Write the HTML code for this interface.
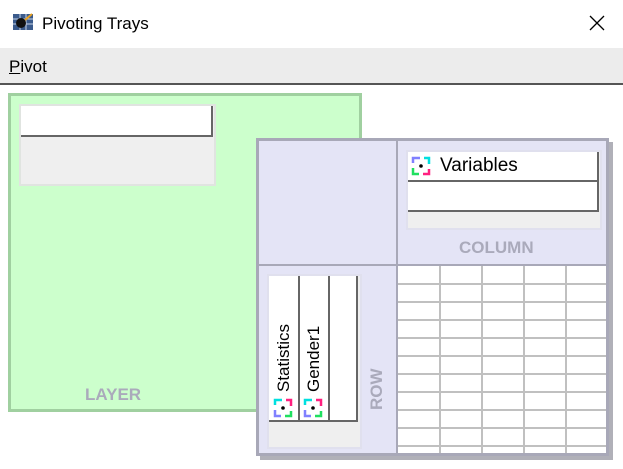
<!DOCTYPE html><html><head><style>
*{margin:0;padding:0;box-sizing:border-box}
body{width:623px;height:469px;background:#fff;position:relative;overflow:hidden;font-family:"Liberation Sans",Arial,sans-serif}
.a{position:absolute}
.g{color:#aaaabb;font-weight:bold;font-size:17px}
</style></head><body>
<div class="a" style="left:0;top:0;width:623px;height:46px;background:#fff"></div>
<svg class="a" style="left:13px;top:12px" width="22" height="20"><rect x="0" y="2" width="20" height="16" fill="#3b5b8c"/><g stroke="#c8d4e8" stroke-width="1"><line x1="0" y1="7" x2="20" y2="7"/><line x1="0" y1="12" x2="20" y2="12"/><line x1="7" y1="2" x2="7" y2="18"/><line x1="13" y1="2" x2="13" y2="18"/></g><circle cx="8" cy="11" r="5" fill="#111"/><path d="M12 8 L19 2" stroke="#e8a020" stroke-width="2"/></svg>
<div class="a" style="left:42px;top:14px;font-size:17px;color:#000">Pivoting Trays</div>
<svg class="a" style="left:589px;top:15px" width="16" height="16"><path d="M1 1L15 15M15 1L1 15" stroke="#000" stroke-width="1.3"/></svg>
<div class="a" style="left:0;top:48px;width:623px;height:36px;background:#ececec"></div>
<div class="a" style="left:0;top:83px;width:623px;height:2px;background:#555"></div>
<div class="a" style="left:9px;top:57px;font-size:17px"><u>P</u>ivot</div>
<!-- layer -->
<div class="a" style="left:8px;top:93px;width:354px;height:319px;background:#ccffcc;border:3px solid #a0d0a0"></div>
<div class="a" style="left:19px;top:104px;width:197px;height:82px;background:#efefef;border:2px solid #e0e4e0"></div>
<div class="a" style="left:21px;top:106px;width:192px;height:31px;background:#fff;border-right:2px solid #666;border-bottom:2px solid #666"></div>
<div class="a g" style="left:85px;top:385px">LAYER</div>
<!-- pivot panel -->
<div class="a" style="left:260px;top:142px;width:353px;height:318px;background:#b0b0b8"></div>
<div class="a" style="left:256px;top:138px;width:353px;height:318px;background:#e4e4f6;border:3px solid #a8a8b8"></div>
<div class="a" style="left:396px;top:141px;width:2px;height:312px;background:#a8a8b8"></div>
<div class="a" style="left:259px;top:264px;width:347px;height:2px;background:#a8a8b8"></div>
<div class="a" style="left:406px;top:150px;width:196px;height:80px;background:#efefef;border:2px solid #e0e0ee"></div>
<div class="a" style="left:408px;top:152px;width:191px;height:30px;background:#fff;border-right:2px solid #666;border-bottom:2px solid #666"></div>
<div class="a" style="left:408px;top:182px;width:191px;height:30px;background:#fff;border-right:2px solid #666;border-bottom:2px solid #666"></div>
<svg class="a" style="left:411px;top:156px" width="22" height="22"><path d="M2 7V2H9" stroke="#8080ff" stroke-width="2.5" fill="none"/><path d="M13 2H18V8" stroke="#00e0e0" stroke-width="2.5" fill="none"/><path d="M18 13V18H12" stroke="#ff2080" stroke-width="2.5" fill="none"/><path d="M8 18H2V12" stroke="#20e060" stroke-width="2.5" fill="none"/><circle cx="10" cy="10" r="1.8" fill="#000"/></svg>
<div class="a" style="left:440px;top:155px;font-size:19px">Variables</div>
<div class="a g" style="left:459px;top:238px">COLUMN</div>
<!-- grid -->
<svg class="a" style="left:398px;top:266px" width="208" height="187"><rect width="208" height="187" fill="#fff"/><g stroke="#c0c0c0" stroke-width="2"><line x1="42" y1="0" x2="42" y2="187"/><line x1="84" y1="0" x2="84" y2="187"/><line x1="126" y1="0" x2="126" y2="187"/><line x1="168" y1="0" x2="168" y2="187"/><line x1="0" y1="18" x2="208" y2="18"/><line x1="0" y1="36" x2="208" y2="36"/><line x1="0" y1="54" x2="208" y2="54"/><line x1="0" y1="72" x2="208" y2="72"/><line x1="0" y1="90" x2="208" y2="90"/><line x1="0" y1="108" x2="208" y2="108"/><line x1="0" y1="126" x2="208" y2="126"/><line x1="0" y1="144" x2="208" y2="144"/><line x1="0" y1="162" x2="208" y2="162"/><line x1="0" y1="180" x2="208" y2="180"/></g></svg>
<!-- row -->
<div class="a" style="left:267px;top:274px;width:95px;height:175px;background:#efefef;border:2px solid #e0e0ee"></div>
<div class="a" style="left:269px;top:276px;width:89px;height:146px;background:#fff;border-right:2px solid #666;border-bottom:2px solid #666"></div>
<div class="a" style="left:298px;top:276px;width:2px;height:146px;background:#666"></div>
<div class="a" style="left:328px;top:276px;width:2px;height:146px;background:#666"></div>
<div class="a" style="left:274px;top:392px;transform:rotate(-90deg);transform-origin:0 0;font-size:17px;white-space:nowrap;line-height:20px">Statistics</div>
<div class="a" style="left:304px;top:392px;transform:rotate(-90deg);transform-origin:0 0;font-size:17px;white-space:nowrap;line-height:20px">Gender1</div>
<svg class="a" style="left:273px;top:398px" width="22" height="22"><path d="M2 7V2H9" stroke="#00e0e0" stroke-width="2.5" fill="none"/><path d="M13 2H18V8" stroke="#ff2080" stroke-width="2.5" fill="none"/><path d="M18 13V18H12" stroke="#20e060" stroke-width="2.5" fill="none"/><path d="M8 18H2V12" stroke="#8080ff" stroke-width="2.5" fill="none"/><circle cx="10" cy="10" r="1.8" fill="#000"/></svg>
<svg class="a" style="left:303px;top:398px" width="22" height="22"><path d="M2 7V2H9" stroke="#00e0e0" stroke-width="2.5" fill="none"/><path d="M13 2H18V8" stroke="#ff2080" stroke-width="2.5" fill="none"/><path d="M18 13V18H12" stroke="#20e060" stroke-width="2.5" fill="none"/><path d="M8 18H2V12" stroke="#8080ff" stroke-width="2.5" fill="none"/><circle cx="10" cy="10" r="1.8" fill="#000"/></svg>
<div class="a g" style="left:367px;top:410px;transform:rotate(-90deg);transform-origin:0 0;line-height:20px">ROW</div>
</body></html>
